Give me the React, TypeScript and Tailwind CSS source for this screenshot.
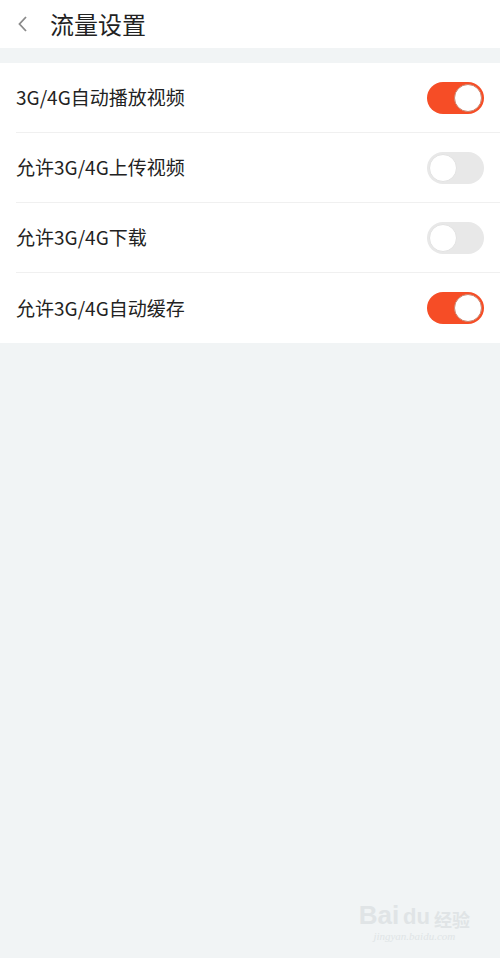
import React, { useState } from 'react';

const items = [
  { label: '3G/4G自动播放视频', on: true },
  { label: '允许3G/4G上传视频', on: false },
  { label: '允许3G/4G下载', on: false },
  { label: '允许3G/4G自动缓存', on: true },
];

const Toggle: React.FC<{ on: boolean; onClick: () => void }> = ({ on, onClick }) => (
  <button
    onClick={onClick}
    className={`relative w-[57px] h-[32px] rounded-full flex items-center px-[2px] ${on ? 'bg-[#f64d26] justify-end' : 'bg-[#e8e8e8] justify-start'}`}
  >
    <span className={`w-[28px] h-[28px] rounded-full bg-white ${on ? 'border border-[#c9856f]' : 'border border-[#e2e2e2]'}`} />
  </button>
);

export default function App() {
  const [state, setState] = useState(items.map((i) => i.on));

  return (
    <div className="w-[500px] h-[958px] bg-[#f1f4f5] flex flex-col font-['Noto_Sans_CJK_SC','Noto_Sans',sans-serif] relative">
      <div className="h-[48px] bg-white flex items-center">
        <svg width="14" height="20" viewBox="0 0 14 20" className="ml-[16px]">
          <path d="M10 3 L3.5 10 L10 17" fill="none" stroke="#8a8a8a" strokeWidth="1.8" />
        </svg>
        <h1 className="ml-[20px] text-[24px] text-[#222] leading-none">流量设置</h1>
      </div>

      <div className="mt-[15px] bg-white pl-[16px]">
        {items.map((item, i) => (
          <div
            key={item.label}
            className={`h-[70px] flex items-center justify-between pr-[16px] ${i < items.length - 1 ? 'border-b border-[#f0f0f0]' : ''}`}
          >
            <span className="text-[19px] text-[#222]">{item.label}</span>
            <Toggle on={state[i]} onClick={() => setState(state.map((s, j) => (j === i ? !s : s)))} />
          </div>
        ))}
      </div>

      <div className="absolute right-[30px] bottom-[14px] flex flex-col items-center text-[#e0e4e6] select-none">
        <div className="flex items-end gap-1 font-['Liberation_Sans',sans-serif] text-[26px] font-bold leading-none">
          <span>Bai</span>
          <span className="text-[22px]">du</span>
          <span className="text-[18px] font-['Noto_Sans_CJK_SC',sans-serif]">经验</span>
        </div>
        <span className="text-[11px] italic font-['Liberation_Serif',serif]">jingyan.baidu.com</span>
      </div>
    </div>
  );
}
